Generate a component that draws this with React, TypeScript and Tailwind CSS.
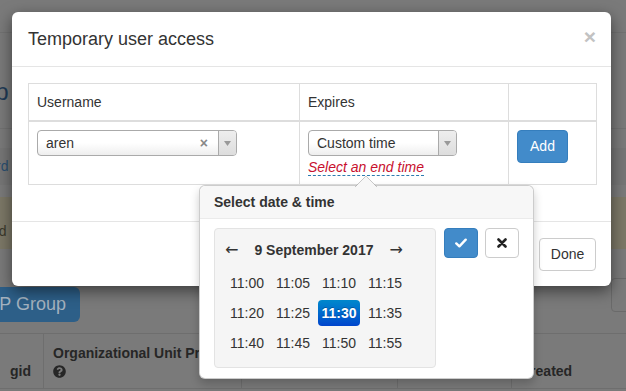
import { FaQuestionCircle } from "react-icons/fa";

const times = [
  "11:00", "11:05", "11:10", "11:15",
  "11:20", "11:25", "11:30", "11:35",
  "11:40", "11:45", "11:50", "11:55",
];

function Caret() {
  return (
    <svg width="7" height="5" viewBox="0 0 7 5">
      <path d="M0 0 L7 0 L3.5 5 Z" fill="#999" />
    </svg>
  );
}

function Select({ value, width, clear }: { value: string; width: string; clear?: boolean }) {
  return (
    <div
      className={`flex h-[26px] ${width} items-center overflow-hidden rounded-[4px] border border-[#aaa] bg-gradient-to-b from-white from-50% to-[#eee]`}
    >
      <span className="flex-1 pl-[8px] leading-none text-[#333]">{value}</span>
      {clear && <span className="mr-[10px] text-[14px] font-bold leading-none text-[#888]">×</span>}
      <span className="flex h-full w-[18px] items-center justify-center border-l border-[#aaa] bg-gradient-to-b from-[#eee] to-[#ddd]">
        <Caret />
      </span>
    </div>
  );
}

// page behind the modal backdrop, drawn already darkened
function Page() {
  return (
    <div className="h-[391px] overflow-hidden bg-[#7a7a7a]">
      <div className="h-[33px] border-b border-[#727272]" />
      <div className="flex h-[96px] items-center border-b border-[#727272] pt-[22px]">
        <span className="ml-[-58px] whitespace-nowrap text-[24px] text-[#1f3a56]">Group</span>
      </div>
      <div className="mt-[19px] flex h-[37px] items-center bg-[#767676]">
        <span className="ml-[-60px] whitespace-nowrap text-[14px] text-[#2a4f70]">Dashboard</span>
      </div>
      <div className="mt-[12px] flex h-[52px] items-center justify-between bg-[#7c7867] pt-[16px]">
        <span className="ml-[-48px] whitespace-nowrap text-[14px] text-[#3b382c]">Disabled</span>
        <span className="mr-[-30px] whitespace-nowrap text-[14px] font-bold text-[#3b382c]">here</span>
      </div>
      <div className="mt-[29px] flex items-start justify-between">
        <div className="mt-[9px] flex h-[35px] w-[80px] items-center justify-end whitespace-nowrap rounded-r-[6px] bg-[#2d5f88] pr-[14px] text-[18px] text-[#a4b2bf]">
          Add LDAP Group
        </div>
        <div className="-mr-[25px] h-[34px] w-[40px] rounded-[4px] border border-[#6a6a6a]" />
      </div>
      <div className="mt-[11px] flex h-[56px] border-y border-[#6e6e6e] text-[14px] font-bold text-[#262626]">
        <div className="flex w-[44px] items-end justify-end border-r border-[#6e6e6e] pb-[6px] pr-[12px]">gid</div>
        <div className="w-[198px] border-r border-[#6e6e6e] pl-[9px] pt-[9px] leading-[20px]">
          Organizational Unit Prefix
          <br />
          <FaQuestionCircle className="mt-[2px] text-[13px]" />
        </div>
        <div className="w-[156px] border-r border-[#6e6e6e]" />
        <div className="w-[114px] border-r border-[#6e6e6e]" />
        <div className="flex items-end pb-[6px] pl-[8px]">Created</div>
      </div>
    </div>
  );
}

export default function App() {
  return (
    <div className="relative h-[391px] w-[626px] overflow-hidden font-['Liberation_Sans',Arial,sans-serif] text-[14px] text-[#333]">
      <Page />

      {/* modal */}
      <div className="absolute left-[12px] top-[12px] w-[599px] rounded-[6px] bg-white shadow-[0_5px_15px_rgba(0,0,0,0.5)]">
        <div className="flex h-[55px] items-center justify-between border-b border-[#e5e5e5] pl-[16px] pr-[15px]">
          <h4 className="text-[18px] text-[#333]">Temporary user access</h4>
          <span className="mt-[-5px] text-[21px] font-bold leading-none text-[#c2c2c2]">×</span>
        </div>
        <div className="pb-[36px] pl-[16px] pt-[16px]">
          <div className="w-[569px] border border-[#ddd]">
            <div className="flex h-[38px] border-b-2 border-[#ddd]">
              <div className="flex w-[271px] items-center border-r border-[#ddd] px-[8px]">Username</div>
              <div className="flex w-[209px] items-center border-r border-[#ddd] px-[8px]">Expires</div>
              <div className="flex-1" />
            </div>
            <div className="flex h-[62px]">
              <div className="w-[271px] border-r border-[#ddd] px-[8px] pt-[8px]">
                <Select value="aren" width="w-[200px]" clear />
              </div>
              <div className="w-[209px] border-r border-[#ddd] px-[8px] pt-[8px]">
                <Select value="Custom time" width="w-[149px]" />
                <span className="mt-[3px] inline-block italic leading-[16px] text-[#c8102e] [border-bottom:1px_dashed_#2b7bb0]">
                  Select an end time
                </span>
              </div>
              <div className="flex-1 px-[8px] pt-[8px]">
                <button className="h-[33px] w-[51px] rounded-[4px] border border-[#357ebd] bg-[#428bca] text-white">
                  Add
                </button>
              </div>
            </div>
          </div>
        </div>
        <div className="flex h-[65px] items-center justify-end border-t border-[#e5e5e5] pr-[15px]">
          <button className="h-[33px] w-[57px] rounded-[4px] border border-[#ccc] bg-white text-[#333]">Done</button>
        </div>
      </div>

      {/* date & time popover */}
      <div className="absolute left-[199px] top-[185px] w-[335px] rounded-[6px] border border-black/20 bg-white shadow-[0_5px_10px_rgba(0,0,0,0.2)]">
        <svg className="absolute left-[155px] top-[-10px]" width="22" height="11" viewBox="0 0 22 11">
          <path d="M0 11 L11 0 L22 11" fill="#f7f7f7" stroke="rgba(0,0,0,0.2)" />
        </svg>
        <div className="flex h-[33px] items-center rounded-t-[6px] border-b border-[#ebebeb] bg-[#f7f7f7] pl-[14px] font-bold">
          Select date &amp; time
        </div>
        <div className="flex items-start gap-[8px] pb-[10px] pl-[14px] pt-[9px]">
          <div className="h-[140px] w-[222px] rounded-[4px] border border-[#e3e3e3] bg-[#f5f5f5] pl-[10px] pt-[10px]">
            <div className="flex h-[22px] items-center gap-[16px] text-[#333]">
              <span className="font-['DejaVu_Sans',sans-serif] text-[16px] leading-none">←</span>
              <span className="font-bold">9 September 2017</span>
              <span className="font-['DejaVu_Sans',sans-serif] text-[16px] leading-none">→</span>
            </div>
            <div className="mt-[9px] grid w-[180px] grid-cols-[repeat(4,42px)] gap-x-[4px] gap-y-[4px] pl-[1px]">
              {times.map((t) => (
                <div
                  key={t}
                  className={
                    t === "11:30"
                      ? "flex h-[26px] items-center justify-center rounded-[4px] bg-gradient-to-b from-[#0088cc] to-[#0044cc] font-bold text-white [text-shadow:0_-1px_0_rgba(0,0,0,0.25)]"
                      : "flex h-[26px] items-center justify-center text-[#333]"
                  }
                >
                  {t}
                </div>
              ))}
            </div>
          </div>
          <div className="flex gap-[7px]">
            <button className="flex h-[30px] w-[34px] items-center justify-center rounded-[4px] border border-[#357ebd] bg-[#428bca]">
              <svg width="12" height="10" viewBox="0 0 12 10">
                <path d="M1.3 5.4 L4.4 8.3 L10.7 1.7" fill="none" stroke="#fff" strokeWidth="2.4" strokeLinecap="round" strokeLinejoin="round" />
              </svg>
            </button>
            <button className="flex h-[30px] w-[34px] items-center justify-center rounded-[4px] border border-[#ccc] bg-white">
              <svg width="10" height="10" viewBox="0 0 10 10">
                <path d="M1.5 1.5 L8.5 8.5 M8.5 1.5 L1.5 8.5" fill="none" stroke="#222" strokeWidth="2.6" strokeLinecap="round" />
              </svg>
            </button>
          </div>
        </div>
      </div>
    </div>
  );
}
